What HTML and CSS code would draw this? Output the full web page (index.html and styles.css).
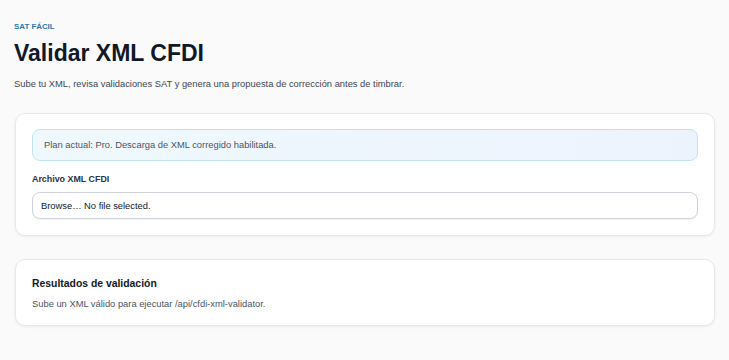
FILE: index.html
```html
<!DOCTYPE html>
<html lang="es">
<head>
<meta charset="utf-8">
<title>Validar XML CFDI</title>
<link rel="stylesheet" href="styles.css">
</head>
<body>
<main class="page">
  <header class="head">
    <p class="eyebrow">SAT FÁCIL</p>
    <h1 class="title">Validar XML CFDI</h1>
    <p class="subtitle">Sube tu XML, revisa validaciones SAT y genera una propuesta de corrección antes de timbrar.</p>
  </header>
  <section class="card card-form">
    <div class="notice">Plan actual: Pro. Descarga de XML corregido habilitada.</div>
    <label class="label" for="xml">Archivo XML CFDI</label>
    <div class="file" id="xml">Browse… No file selected.</div>
  </section>
  <section class="card card-results">
    <h2 class="card-title">Resultados de validación</h2>
    <p class="muted">Sube un XML válido para ejecutar /api/cfdi-xml-validator.</p>
  </section>
</main>
</body>
</html>
```
FILE: styles.css
```css
* { box-sizing: border-box; }
html, body { margin: 0; padding: 0; }
body {
  background: #fafafb;
  font-family: "Liberation Sans", Arial, sans-serif;
  color: #0f172a;
}
.page {
  padding: 22px 14px 20px 14px;
  display: flex;
  flex-direction: column;
}
.head { margin-bottom: 23px; }
.eyebrow {
  margin: 0;
  font-size: 7.9px;
  font-weight: 700;
  color: #2a78ab;
  line-height: 10px;
}
.title {
  margin: 7px 0 0 0;
  font-size: 23px;
  font-weight: 700;
  line-height: 28px;
  color: #111827;
}
.subtitle {
  margin: 11px 0 0 0;
  font-size: 9.35px;
  line-height: 12px;
  color: #3f4652;
}
.card {
  background: #fff;
  border: 1px solid #e6e8eb;
  border-radius: 10px;
  box-shadow: 0 1px 3px rgba(15, 23, 42, 0.06);
  margin-left: 1px;
}
.card-form {
  padding: 15px 16px 16px 16px;
  display: flex;
  flex-direction: column;
  margin-bottom: 23px;
}
.notice {
  height: 32px;
  display: flex;
  align-items: center;
  padding: 0 11px;
  border: 1px solid #bfe3f3;
  border-radius: 8px;
  background: linear-gradient(90deg, #eff9fd 0%, #edf3fd 100%);
  font-size: 9.35px;
  color: #4b5563;
}
.label {
  margin-top: 12px;
  font-size: 8.9px;
  font-weight: 700;
  color: #2b3340;
  line-height: 12px;
}
.file {
  margin-top: 7px;
  height: 27px;
  display: flex;
  align-items: center;
  padding: 0 8px;
  border: 1px solid #cfd3d9;
  border-radius: 8px;
  box-shadow: 0 1px 1px rgba(0,0,0,0.05);
  font-size: 9.35px;
  color: #111827;
  background: #fff;
}
.card-results {
  padding: 17px 16px 15px 16px;
}
.card-title {
  margin: 0;
  font-size: 10.4px;
  font-weight: 700;
  color: #111827;
  line-height: 14px;
}
.muted {
  margin: 7px 0 0 0;
  font-size: 9.35px;
  color: #4b5563;
  line-height: 12px;
}
```
